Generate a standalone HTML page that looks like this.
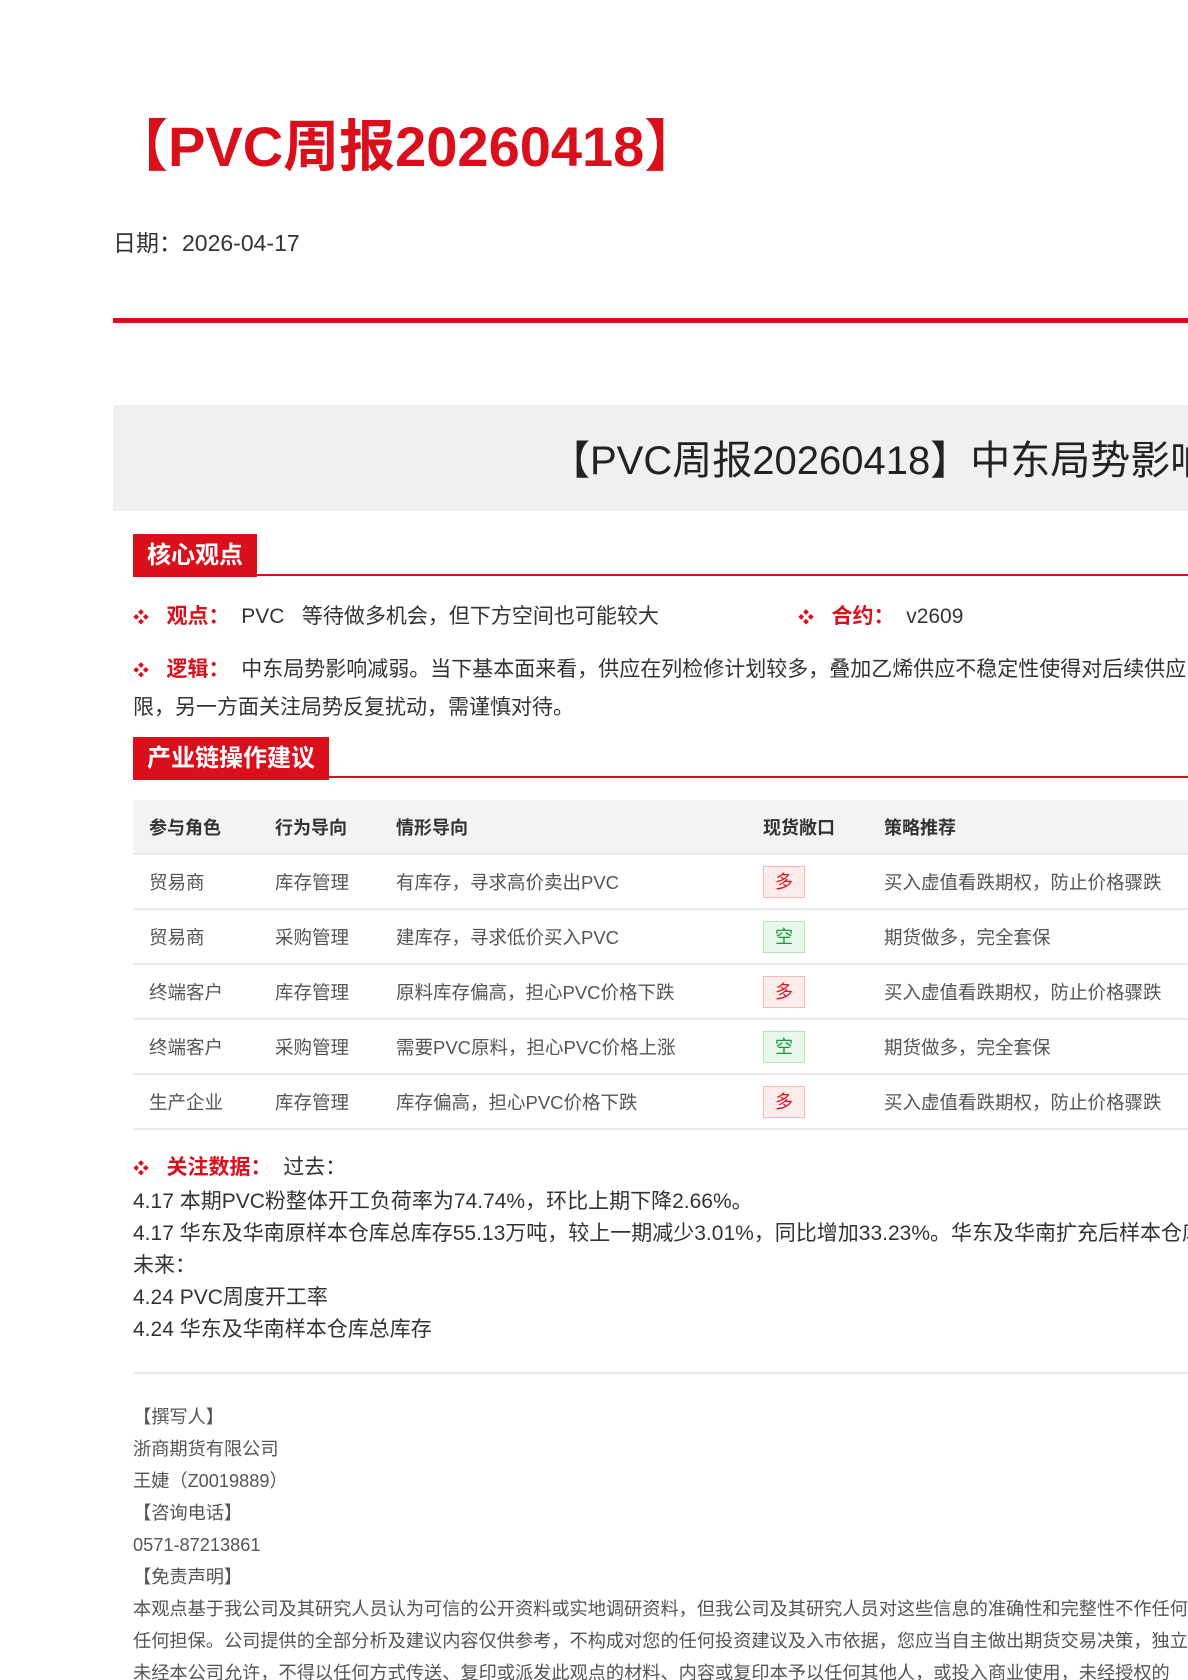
<!DOCTYPE html>
<html style="overflow:hidden"><head><meta charset="utf-8"><style>
*{margin:0;padding:0;box-sizing:border-box}
html,body{width:1188px;height:1680px;overflow:hidden}
body{background:#fff;font-family:"Liberation Sans","Noto Sans CJK SC",sans-serif;color:#333;position:relative}
#w{position:absolute;left:0;top:0;width:1188px;height:1680px;overflow:hidden}
.a{position:absolute;white-space:nowrap}
.red{color:#d9101c}
.hdr{position:absolute;left:133px;height:43px;background:#d9101c;color:#fff;font-size:24px;line-height:43px;padding:0 14px;font-weight:bold}
.hl{position:absolute;left:133px;width:1055px;height:2px;background:#d9101c}
.dot{color:#d9101c;font-size:16px}
table{position:absolute;left:133px;top:800px;width:1100px;border-collapse:collapse;font-size:18.5px;color:#555}
th{background:#f2f3f5;height:54px;text-align:left;font-weight:bold;color:#333;padding-left:16px;border-bottom:2px solid #e8eaee;font-size:18px}
td{height:55px;padding-left:16px;border-bottom:2px solid #e8eaee}
.b{display:inline-block;width:42px;height:32px;line-height:30px;text-align:center;font-size:18px;border:1px solid}
.bd{color:#e0141e;background:#fdecec;border-color:#f5b8bb}
.bk{color:#1a9a3a;background:#e9f7ec;border-color:#b7e2c0}
.ft{position:absolute;left:133px;font-size:18.2px;color:#555;line-height:32px;white-space:nowrap}
</style></head><body><div id="w">
<div class="a red" style="left:112px;top:112px;font-size:56px;font-weight:bold;line-height:70px">【PVC周报20260418】</div>
<div class="a" style="left:113px;top:224px;font-size:23px;color:#333">日期：2026-04-17</div>
<div class="a" style="left:113px;top:318px;width:1075px;height:5px;background:#d9101c"></div>
<div class="a" style="left:113px;top:405px;width:1075px;height:106px;background:#f0f0f0"></div>
<div class="a" style="left:550px;top:436px;font-size:40px;color:#222;line-height:50px">【PVC周报20260418】中东局势影响减弱</div>

<div class="hl" style="top:574px"></div>
<div class="hdr" style="top:534px">核心观点</div>
<div class="a" style="left:133px;top:602px;font-size:21px;line-height:30px"><span class="dot">❖</span>&nbsp;&nbsp;&nbsp;<b class="red">观点：</b>&nbsp;&nbsp;PVC&nbsp;&nbsp;&nbsp;等待做多机会，但下方空间也可能较大</div>
<div class="a" style="left:798px;top:602px;font-size:21px;line-height:30px"><span class="dot">❖</span>&nbsp;&nbsp;&nbsp;<b class="red">合约：</b>&nbsp;&nbsp;v2609</div>
<div class="a" style="left:133px;top:652px;font-size:21px;line-height:36px"><span class="dot">❖</span>&nbsp;&nbsp;&nbsp;<b class="red">逻辑：</b>&nbsp;&nbsp;中东局势影响减弱。当下基本面来看，供应在列检修计划较多，叠加乙烯供应不稳定性使得对后续供应<br>限，另一方面关注局势反复扰动，需谨慎对待。</div>

<div class="hl" style="top:776px"></div>
<div class="hdr" style="top:737px">产业链操作建议</div>
<table>
<tr><th style="width:126px">参与角色</th><th style="width:121px">行为导向</th><th style="width:367px">情形导向</th><th style="width:121px">现货敞口</th><th>策略推荐</th></tr>
<tr><td>贸易商</td><td>库存管理</td><td>有库存，寻求高价卖出PVC</td><td><span class="b bd">多</span></td><td>买入虚值看跌期权，防止价格骤跌</td></tr>
<tr><td>贸易商</td><td>采购管理</td><td>建库存，寻求低价买入PVC</td><td><span class="b bk">空</span></td><td>期货做多，完全套保</td></tr>
<tr><td>终端客户</td><td>库存管理</td><td>原料库存偏高，担心PVC价格下跌</td><td><span class="b bd">多</span></td><td>买入虚值看跌期权，防止价格骤跌</td></tr>
<tr><td>终端客户</td><td>采购管理</td><td>需要PVC原料，担心PVC价格上涨</td><td><span class="b bk">空</span></td><td>期货做多，完全套保</td></tr>
<tr><td>生产企业</td><td>库存管理</td><td>库存偏高，担心PVC价格下跌</td><td><span class="b bd">多</span></td><td>买入虚值看跌期权，防止价格骤跌</td></tr>
</table>

<div class="a" style="left:133px;top:1152px;font-size:21px;line-height:32px"><span class="dot">❖</span>&nbsp;&nbsp;&nbsp;<b class="red">关注数据：</b>&nbsp;&nbsp;过去：<br>4.17 本期PVC粉整体开工负荷率为74.74%，环比上期下降2.66%。<br>4.17 华东及华南原样本仓库总库存55.13万吨，较上一期减少3.01%，同比增加33.23%。华东及华南扩充后样本仓库<br>未来：<br>4.24 PVC周度开工率<br>4.24 华东及华南样本仓库总库存</div>

<div class="a" style="left:133px;top:1372px;width:1055px;height:2px;background:#e8e8e8"></div>
<div class="ft" style="top:1401px">【撰写人】<br>浙商期货有限公司<br>王婕（Z0019889）<br>【咨询电话】<br>0571-87213861<br>【免责声明】<br>本观点基于我公司及其研究人员认为可信的公开资料或实地调研资料，但我公司及其研究人员对这些信息的准确性和完整性不作任何保证<br>任何担保。公司提供的全部分析及建议内容仅供参考，不构成对您的任何投资建议及入市依据，您应当自主做出期货交易决策，独立承担<br>未经本公司允许，不得以任何方式传送、复印或派发此观点的材料、内容或复印本予以任何其他人，或投入商业使用，未经授权的</div>
</div></body></html>
